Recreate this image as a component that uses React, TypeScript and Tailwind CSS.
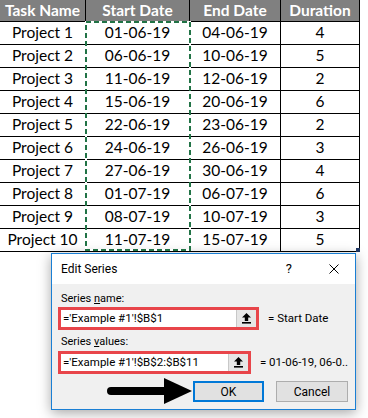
import React from "react";

const rows: string[][] = [
  ["Project 1", "01-06-19", "04-06-19", "4"],
  ["Project 2", "06-06-19", "10-06-19", "5"],
  ["Project 3", "11-06-19", "12-06-19", "2"],
  ["Project 4", "15-06-19", "20-06-19", "6"],
  ["Project 5", "22-06-19", "23-06-19", "2"],
  ["Project 6", "24-06-19", "26-06-19", "3"],
  ["Project 7", "27-06-19", "30-06-19", "4"],
  ["Project 8", "01-07-19", "06-07-19", "6"],
  ["Project 9", "08-07-19", "10-07-19", "3"],
  ["Project 10", "11-07-19", "15-07-19", "5"],
];

const headers = ["Task Name", "Start Date", "End Date", "Duration"];

function RefIcon() {
  return (
    <svg width="9" height="11" viewBox="0 0 9 11">
      <path d="M4.5 0 L9 4.5 H6.2 V8 H2.8 V4.5 H0 Z" fill="#000" />
      <rect x="0" y="9" width="9" height="1.6" fill="#000" />
    </svg>
  );
}

function RefInput({ value }: { value: string }) {
  return (
    <div className="w-[201px] h-[23px] border-[3px] border-[#e8454a] flex bg-white">
      <div className="flex-1 pl-[2px] flex items-center text-[11.5px] leading-none text-black whitespace-nowrap overflow-hidden">
        {value}
      </div>
      <div className="w-[20px] h-full bg-[#e6e6e6] border-l border-[#c8c8c8] flex items-center justify-center">
        <RefIcon />
      </div>
    </div>
  );
}

export default function App() {
  return (
    <div className="relative w-[368px] h-[418px] bg-white overflow-hidden">
      {/* Spreadsheet */}
      <div className="relative w-[360px] font-['Lato',sans-serif] text-[15.5px]">
        <div className="grid grid-cols-[86px_104px_91px_79px] h-[22px] bg-[#808080]">
          {headers.map((h) => (
            <div
              key={h}
              className="border-r border-b border-black flex items-center justify-center font-bold text-white leading-none"
            >
              {h}
            </div>
          ))}
        </div>
        {rows.map((r) => (
          <div key={r[0]} className="grid grid-cols-[86px_104px_91px_79px] h-[23px]">
            {r.map((c, i) => (
              <div
                key={i}
                className="border-r border-b border-black flex items-center justify-center text-black leading-none"
              >
                {c}
              </div>
            ))}
          </div>
        ))}
        {/* copy marquee */}
        <svg className="absolute left-0 top-0 pointer-events-none" width="360" height="252">
          <rect x="86" y="22" width="104" height="228" fill="none" stroke="#ffffff" strokeWidth="2" />
          <rect
            x="86"
            y="22"
            width="104"
            height="228"
            fill="none"
            stroke="#217346"
            strokeWidth="2"
            strokeDasharray="5 3"
          />
        </svg>
        <div className="absolute left-[356px] top-[248px] w-[4px] h-[4px] bg-[#203864]" />
      </div>

      {/* Dialog */}
      <div className="ml-[51px] mt-[1px] w-[305px] h-[157px] border border-[#1a7fd4] bg-[#f0f0f0] shadow-[0_3px_12px_rgba(0,0,0,0.35)] font-['Roboto',sans-serif] text-black flex flex-col">
        <div className="h-[30px] bg-white flex items-center justify-between pl-[9px] pr-[16px]">
          <span className="text-[12px]">Edit Series</span>
          <div className="flex items-center gap-[37px]">
            <span className="text-[13px]">?</span>
            <svg width="10" height="10" viewBox="0 0 10 10">
              <path d="M0.5 0.5 L9.5 9.5 M9.5 0.5 L0.5 9.5" stroke="#000" strokeWidth="1" />
            </svg>
          </div>
        </div>
        <div className="flex-1 pl-[6px] pr-[7px] pt-[7px] flex flex-col">
          <div className="h-[16px] pl-[3px] text-[11px] leading-[16px]">
            Series <span className="underline">n</span>ame:
          </div>
          <div className="flex items-center gap-[9px]">
            <RefInput value="='Example #1'!$B$1" />
            <span className="text-[11.5px]">= Start Date</span>
          </div>
          <div className="h-[16px] mt-[4px] pl-[3px] text-[11px] leading-[16px]">
            Series <span className="underline">v</span>alues:
          </div>
          <div className="flex items-center gap-[9px] mt-[1px]">
            <RefInput value="='Example #1'!$B$2:$B$11" />
            <span className="text-[11.5px] whitespace-nowrap">= 01-06-19, 06-0..</span>
          </div>
          <div className="flex justify-end gap-[12px] mt-[7px]">
            <div className="w-[71px] h-[21px] border-2 border-[#0078d7] bg-[#e1e1e1] flex items-center justify-center text-[12px]">
              OK
            </div>
            <div className="w-[72px] h-[21px] border border-[#adadad] bg-[#e1e1e1] flex items-center justify-center text-[12px]">
              Cancel
            </div>
          </div>
        </div>
      </div>

      {/* annotation arrow */}
      <svg className="absolute left-0 top-0 pointer-events-none" width="368" height="418">
        <line x1="111" y1="391" x2="168" y2="391" stroke="#000" strokeWidth="8" strokeLinecap="round" />
        <polygon points="164,378 192,391 164,404" fill="#000" />
      </svg>
    </div>
  );
}
